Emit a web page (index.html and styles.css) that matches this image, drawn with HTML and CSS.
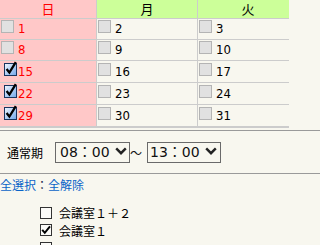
FILE: index.html
```html
<!DOCTYPE html>
<html lang="ja">
<head>
<meta charset="utf-8">
<title>予約</title>
<link rel="stylesheet" href="styles.css">
</head>
<body>
<svg class="defs" width="0" height="0" aria-hidden="true">
  <defs>
    <linearGradient id="cbg" x1="0" y1="0" x2="1" y2="1">
      <stop offset="0" stop-color="#f2f8ff"/>
      <stop offset="1" stop-color="#6fa6ea"/>
    </linearGradient>
  </defs>
</svg>
<div class="cal">
  <table class="cal-table">
    <thead>
      <tr><th class="sun c1">日</th><th class="c2">月</th><th class="c3">火</th></tr>
    </thead>
    <tbody>
      <tr><td class="sun"><span class="box"></span>1</td><td><span class="box"></span>2</td><td><span class="box"></span>3</td></tr>
      <tr><td class="sun"><span class="box"></span>8</td><td><span class="box"></span>9</td><td><span class="box"></span>10</td></tr>
      <tr><td class="sun"><svg class="on" width="13" height="15" viewBox="0 0 13 15"><rect x="0.5" y="2.5" width="12" height="12" fill="url(#cbg)" stroke="#17355f"/><path d="M2.6 8 L5.4 11.6 L11.8 1.2" fill="none" stroke="#000" stroke-width="2.3"/></svg>15</td><td><span class="box"></span>16</td><td><span class="box"></span>17</td></tr>
      <tr><td class="sun"><svg class="on" width="13" height="15" viewBox="0 0 13 15"><rect x="0.5" y="2.5" width="12" height="12" fill="url(#cbg)" stroke="#17355f"/><path d="M2.6 8 L5.4 11.6 L11.8 1.2" fill="none" stroke="#000" stroke-width="2.3"/></svg>22</td><td><span class="box"></span>23</td><td><span class="box"></span>24</td></tr>
      <tr class="last"><td class="sun"><svg class="on" width="13" height="15" viewBox="0 0 13 15"><rect x="0.5" y="2.5" width="12" height="12" fill="url(#cbg)" stroke="#17355f"/><path d="M2.6 8 L5.4 11.6 L11.8 1.2" fill="none" stroke="#000" stroke-width="2.3"/></svg>29</td><td><span class="box"></span>30</td><td><span class="box"></span>31</td></tr>
    </tbody>
  </table>
</div>

<div class="period">
  <span class="period-label">通常期</span>
  <span class="sel sel-a">
    <select><option>08：00</option></select>
    <svg class="chev" width="12" height="8" viewBox="0 0 12 8"><path d="M1.2 1.3 L6 6.2 L10.8 1.3" fill="none" stroke="#222" stroke-width="2.4"/></svg>
  </span>
  <span class="tilde">～</span>
  <span class="sel sel-b">
    <select><option>13：00</option></select>
    <svg class="chev" width="12" height="8" viewBox="0 0 12 8"><path d="M1.2 1.3 L6 6.2 L10.8 1.3" fill="none" stroke="#222" stroke-width="2.4"/></svg>
  </span>
</div>

<div class="links"><a href="#">全選択</a><span class="colon">：</span><a href="#">全解除</a></div>

<ul class="rooms">
  <li><span class="chk"></span>会議室１＋２</li>
  <li><span class="chk"><svg width="10" height="10" viewBox="0 0 10 10"><path d="M1.2 4.8 L3.8 7.8 L9 1.4" fill="none" stroke="#000" stroke-width="2"/></svg></span>会議室１</li>
  <li><span class="chk"></span></li>
</ul>
</body>
</html>
```
FILE: styles.css
```css
html, body {
  margin: 0;
  padding: 0;
  background: #f8f7ef;
  color: #000;
  font-family: "DejaVu Sans Condensed", "DejaVu Sans", "Noto Sans CJK JP", sans-serif;
  overflow: hidden;
}

.defs {
  position: absolute;
}

.cal {
  width: 289px;
  overflow: hidden;
}

.cal-table {
  border-collapse: separate;
  border-spacing: 0;
  table-layout: fixed;
  width: 299px;
}

.cal-table th,
.cal-table td {
  box-sizing: border-box;
  padding: 0;
  border-right: 1px solid #cccccc;
  border-bottom: 1px solid #cccccc;
  white-space: nowrap;
}

.cal-table th {
  height: 19px;
  background: #ccff99;
  font-family: "Noto Sans CJK JP", sans-serif;
  font-weight: normal;
  font-size: 13px;
  line-height: 18px;
  text-align: center;
  color: #000;
}

.cal-table th.c1 { width: 97px; }
.cal-table th.c2 { width: 101px; }
.cal-table th.c3 { width: 101px; }

.cal-table td {
  height: 21px;
  font-size: 13px;
  line-height: 20px;
  text-align: left;
  background: #f8f7ef;
}

.cal-table tr.last td {
  height: 22px;
  border-bottom-width: 2px;
}

.cal-table .sun {
  background: #ffc8c8;
  color: #ff0000;
}

.box {
  display: inline-block;
  box-sizing: border-box;
  width: 13px;
  height: 13px;
  margin: 0 4px 0 1px;
  background: #e1e1e1;
  border: 1px solid #b4b4b4;
}

.on {
  display: inline-block;
  vertical-align: baseline;
  margin: 0 1px 0 4px;
}

.period {
  display: flex;
  align-items: center;
  margin-top: 2px;
  padding: 11px 0 10px 7px;
  border-top: 1px solid #9a9a9a;
  border-bottom: 1px solid #9a9a9a;
}

.period-label {
  font-family: "Noto Sans CJK JP", sans-serif;
  font-size: 12px;
  line-height: 16px;
  margin-right: 12px;
}

.sel {
  position: relative;
  display: flex;
  height: 21px;
}

.sel select {
  appearance: none;
  -webkit-appearance: none;
  box-sizing: border-box;
  height: 21px;
  margin: 0;
  padding: 0 0 0 3px;
  border: 1px solid #6a6a6a;
  border-radius: 0;
  background: transparent;
  color: #111;
  font-family: "DejaVu Sans", "Noto Sans CJK JP", sans-serif;
  font-size: 14px;
  line-height: 19px;
  outline: none;
}

.sel-a select { width: 75px; padding-left: 4px; }
.sel-b select { width: 74px; padding-left: 2px; }

.chev {
  position: absolute;
  top: 5px;
  right: 3px;
  pointer-events: none;
}

.sel-b .chev { right: 4px; }

.tilde {
  font-family: "Noto Sans CJK JP", sans-serif;
  font-size: 12px;
  line-height: 16px;
  margin: 0 5px 0 0;
  color: #111;
}

.links {
  padding-top: 3px;
  font-family: "Noto Sans CJK JP", sans-serif;
  font-size: 12px;
  line-height: 16px;
}

.links a {
  color: #0a64c8;
  text-decoration: none;
}

.links .colon {
  color: #1a2a4a;
}

.rooms {
  list-style: none;
  margin: 11px 0 0;
  padding: 0 0 0 40px;
  font-family: "Noto Sans CJK JP", sans-serif;
  font-size: 12px;
}

.rooms li {
  display: flex;
  align-items: center;
  height: 17.5px;
}

.chk {
  display: inline-flex;
  align-items: center;
  justify-content: center;
  box-sizing: border-box;
  width: 12px;
  height: 12px;
  margin-right: 7px;
  background: #fbfbf8;
  border: 1px solid #333;
}
```
